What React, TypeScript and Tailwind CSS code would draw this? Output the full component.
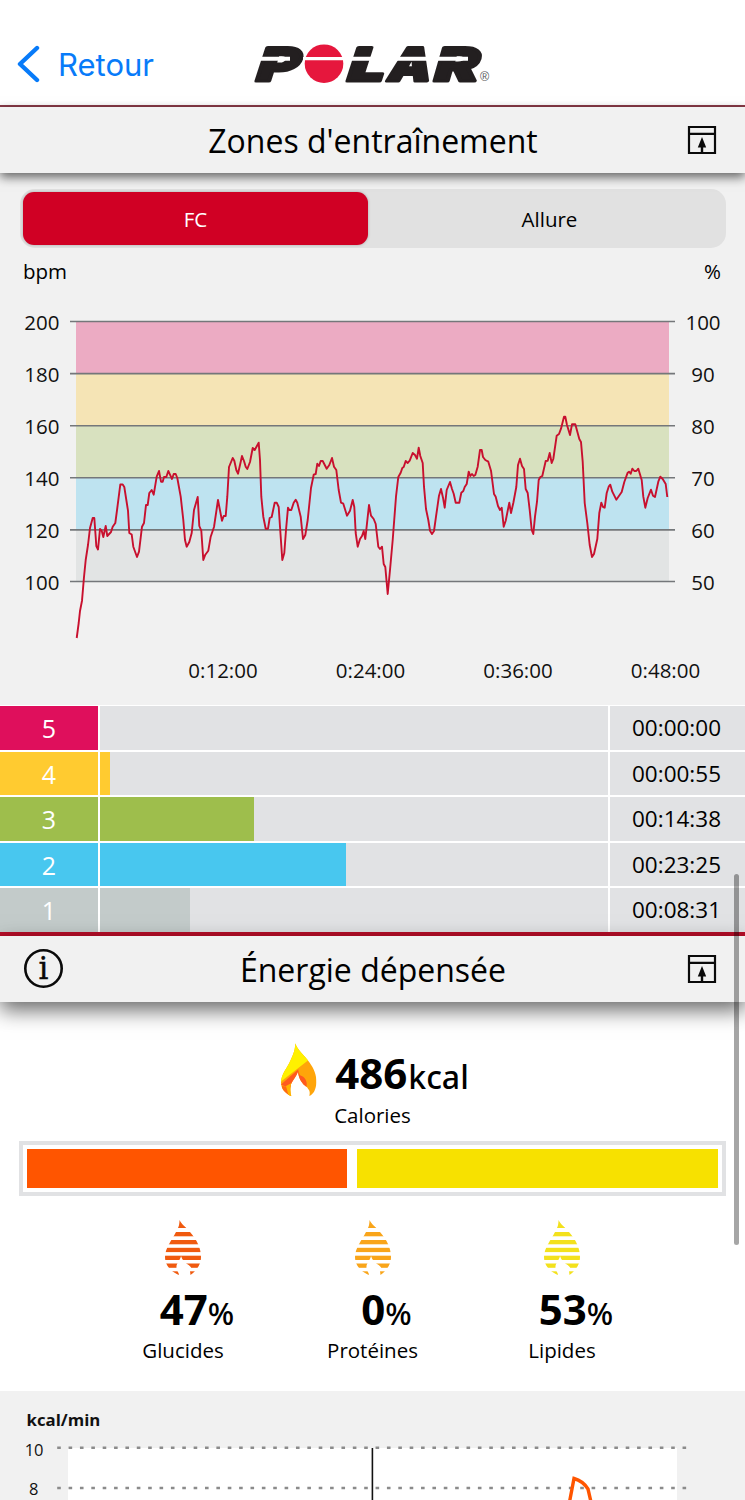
import type { ReactNode } from 'react';

const HR_POINTS =
  '76.7,638 78.7,623 80,611 82,600.7 84,577 85.7,560 88,545 90,528 92.7,518 94.3,518 95.7,537 96.3,546 98,549.5 100,529 101.7,530.7 103.3,537 105.7,526 107.3,536 111,532 112.7,526.7 115.3,523 117.3,508 120.3,484.5 122.7,484.5 124.3,487 128,510.7 129.3,533 131.7,534.5 133.3,546.7 137,557 139,551.7 142,526.7 144,523 146,505 147.7,505 149.3,493 151.7,490 153.7,494.7 156.7,476.7 159,471 161,481.7 162.7,481.7 164,477 166.3,477 168.3,471 170,474.7 172,479 173.7,474 175.7,474 177.3,478 180.7,496.7 183.3,520 185,540 186.7,546.7 189.3,542 191.7,533 194,510 197.7,497 199.3,526 201.3,530.7 203.3,560 205.3,554.7 208.3,550.7 210.7,536.7 214,527 218,500 222,520.7 223.7,516 225.7,516 227.3,496.7 229,467 232.7,458 234.3,460.7 236.3,470 238,473.7 240,465 242,456 244,461 245.7,466.7 247.3,469 250,462 252.7,448 254.7,450 258.7,442.7 260,460 261.3,496.7 263.3,516.7 265.7,528.7 268,528.7 269.7,518 271.7,517 274.7,502.7 276.7,502.7 278.7,507 280,526.7 282.3,560 284.3,553 286,530 288,507.7 289.3,510 291.3,510 293.7,502.7 295.7,499.7 297.3,502.7 300.7,516.7 303,539 305.3,535 307.7,520 311,488 313.7,474.7 315.7,474 317.3,463.7 319,466 320.7,461 322.7,461 326.7,468.7 329.3,465 332,458 334,466.7 336.3,470 338.7,490 341,502.7 343.3,503.7 347,515.7 350,510.7 352.7,500 354.3,507 355.7,533 357.7,546.7 360,539 362,536 363.7,531 365.3,539 369,505 371,515.7 373.7,519 375.7,524 378.3,546.7 380,549 382,546.7 383.7,564 385.3,567 387.7,594 390,570 392.7,540 396,496.7 398.3,477 400.7,472.7 402.3,468 403.7,467 405.7,461 407.7,463 409.7,460.7 412.7,453 415,455 417,458.7 418.7,447.7 420.3,456 422.7,463 424,486.7 426,509 428.3,520 430,530.7 432,534 434,531 436,516.7 439,495.7 441,489 443,497.7 444.7,507.7 446.7,490 450,482 452,489 453.7,493.7 455.7,502.7 459.3,502.7 461.3,492.7 463.3,491 464.7,487 466.7,484 468.7,471.7 470.3,476 472,474 473.7,476 475.3,475 477.7,466.7 480,450 481.7,450 483,457 485.3,460 488.3,461.7 491,470.7 494,494 495.7,496.7 498,506 500,510 501.7,507.7 503.7,526.7 505.7,520.7 509.3,502.7 511,513 513.3,503 516.3,487 518,465 520,458.7 522,466 524,469 525.7,489 527.7,493 529.7,510 531.7,530 533.3,534 535,516.7 537,501.7 538.7,480 540.3,477 542.3,476 545.7,461 547.7,460.7 549.7,453 551.7,463 553.3,459 556.7,435.7 559,434 561,428.7 564,416.7 565.3,416.7 567,425 570,435 572,424.3 575.3,424.3 579.3,439 581,442 582.7,461.7 584.7,503 587.3,523 589.7,545 592,557 594,554 597.3,539 599.3,513 601.3,502.7 603,507 604.7,507.7 606.7,493 608.7,486.7 610.3,484.7 612.3,491.7 616.3,499.7 621.7,492 624.3,482 627.7,472.7 629,471.7 630.7,473.7 632.3,468.7 634.3,471 636.3,471 638.3,468.7 641.7,480 643.3,496.7 645.3,507.7 647.7,498 651,489.7 653,495.7 655,497 658.3,481.7 660.3,476.7 662.7,479 665.7,484 667.3,497';

const bands = [
  { y: 321.5, fill: '#ecabc3' },
  { y: 373.6, fill: '#f5e4b5' },
  { y: 425.7, fill: '#d8e1bf' },
  { y: 477.8, fill: '#bee3f0' },
  { y: 529.9, fill: '#e2e4e4' },
];

const axis = [
  { y: 321.5, bpm: '200', pct: '100' },
  { y: 373.6, bpm: '180', pct: '90' },
  { y: 425.7, bpm: '160', pct: '80' },
  { y: 477.8, bpm: '140', pct: '70' },
  { y: 529.9, bpm: '120', pct: '60' },
  { y: 581.5, bpm: '100', pct: '50' },
];

const times = [
  { x: 223, label: '0:12:00' },
  { x: 370.5, label: '0:24:00' },
  { x: 518, label: '0:36:00' },
  { x: 665.5, label: '0:48:00' },
];

const zones = [
  { zone: 5, color: 'bg-[#df0f5c]', width: 0, time: '00:00:00' },
  { zone: 4, color: 'bg-[#ffcb30]', width: 10, time: '00:00:55' },
  { zone: 3, color: 'bg-[#9ebe4c]', width: 154, time: '00:14:38' },
  { zone: 2, color: 'bg-[#48c7ef]', width: 246, time: '00:23:25' },
  { zone: 1, color: 'bg-[#c3cbca]', width: 90, time: '00:08:31' },
];

const nutrients = [
  { value: '47', label: 'Glucides', color: '#f05a0f' },
  { value: '0', label: 'Protéines', color: '#f9a51a' },
  { value: '53', label: 'Lipides', color: '#f3e11c' },
];

function PolarLogo() {
  return (
    <svg width="240" height="46" viewBox="252 41 240 46" className="block" role="img" aria-label="Polar">
      <g
        fill="#231f20"
        stroke="#231f20"
        strokeWidth="3"
        strokeLinejoin="round"
        fontFamily="Inter, 'Liberation Sans', sans-serif"
        fontWeight="900"
        fontSize="46"
      >
        <text transform="translate(253.5 80.5) skewX(-18)" textLength="42" lengthAdjust="spacingAndGlyphs">P</text>
        <text transform="translate(344.5 80.5) skewX(-18)" textLength="37" lengthAdjust="spacingAndGlyphs">L</text>
        <text transform="translate(385.5 80.5) skewX(-14)" textLength="43" lengthAdjust="spacingAndGlyphs">A</text>
        <text transform="translate(431.5 80.5) skewX(-16)" textLength="44" lengthAdjust="spacingAndGlyphs">R</text>
      </g>
      <circle cx="324" cy="63.7" r="19.3" fill="#e6173d" />
      <path d="M256 56.8h34v4h-34zM303 57h42v3.3h-42zM345 56.8h82v4h-82zM434 56.8h34v4h-34z" fill="#fff" />
      <text x="480" y="81" fontSize="12.5" fill="#555" fontFamily="'Liberation Sans', sans-serif">®</text>
    </svg>
  );
}

function ExpandIcon() {
  return (
    <svg width="30" height="30" viewBox="0 0 30 30" className="block">
      <path d="M2 2h26v26H2zM2 8.8h26" fill="none" stroke="#0a0a0a" strokeWidth="2.2" />
      <path d="M15 12l4.2 10.5h-3V28h-2.4v-5.5h-3z" fill="#0a0a0a" />
    </svg>
  );
}

function InfoIcon() {
  return (
    <svg width="40" height="40" viewBox="0 0 40 40" className="block">
      <circle cx="20.5" cy="19.5" r="18.2" fill="none" stroke="#0a0a0a" strokeWidth="2.6" />
      <text
        x="20.5"
        y="29.5"
        textAnchor="middle"
        fontSize="31"
        fontFamily="'DejaVu Serif', serif"
        fill="#0a0a0a"
        stroke="#0a0a0a"
        strokeWidth="0.4"
      >
        i
      </text>
    </svg>
  );
}

function FlameIcon() {
  return (
    <svg width="36" height="54" viewBox="67 39 108 162" className="block">
      <defs>
        <clipPath id="flame">
          <path d="M110 40C116 60 136 74 152 97C166 117 174 134 173 158C172 178 165 192 152 198C154 188 154 182 148 176C146 170 136 168 129 156C122 146 120 138 118 125C114 138 104 148 97 162C94 174 95 188 98 199C80 190 67 176 67 158C67 132 86 114 96 90C106 70 109 58 110 40Z" />
        </clipPath>
      </defs>
      <g clipPath="url(#flame)">
        <path d="M60 30h120v180H60z" fill="#ffa50a" />
        <path d="M60 30h110v44L60 160z" fill="#fff100" />
        <path d="M66 164L119 118V150L98 170L94 174Z" fill="#ff5a1f" />
        <path d="M118 122L124 136C138 140 148 154 143 172L118 168Z" fill="#ff5a1f" />
        <path d="M70 168L94 172L88 210L66 200Z" fill="#ff6a14" />
        <path d="M82 168L100 158V204L90 198Z" fill="#ffb400" />
      </g>
    </svg>
  );
}

function StripedFlame({ color, id }: { color: string; id: string }) {
  return (
    <svg width="36" height="56" viewBox="0 0 36 56" className="block">
      <defs>
        <clipPath id={id}>
          <path d="M14.5 0C17 5 21 7 25 12C32 20 36 28 36 37C36 45 31 51 25.5 55L25 51C30 45 19 46 16 36C15 41 11 43 11.5 48C12 51 14 53 14 55C6 52 0 45 0 37C0 28 7 20 11 12C14 7 14.5 4 14.5 0Z" />
        </clipPath>
      </defs>
      <g clipPath={`url(#${id})`} fill={color}>
        {[-1, 12, 20, 27.8, 35.7, 43.5, 51.3].map((y) => (
          <rect key={y} x="0" y={y} width="36" height={y < 0 ? 9 : 4.3} />
        ))}
      </g>
    </svg>
  );
}

function SectionHeader({ title, left }: { title: string; left?: ReactNode }) {
  return (
    <div className="flex h-[66px] items-center justify-between bg-[#f1f1f1] pl-[23px] pr-7">
      <div className="w-10">{left}</div>
      <h2 className="pl-1.5 pt-0.5 text-[32px] leading-none text-black">{title}</h2>
      <div className="flex w-10 justify-end">
        <ExpandIcon />
      </div>
    </div>
  );
}

function HeartRateChart() {
  return (
    <svg width="745" height="415" viewBox="0 290 745 415" className="block">
      {bands.map((band) => (
        <rect key={band.y} x="76" y={band.y} width="593" height="52.1" fill={band.fill} />
      ))}
      {axis.map((row) => (
        <g key={row.y} fontSize="20.5" fill="#111">
          <line x1="70" x2="675" y1={row.y} y2={row.y} stroke="#74777a" strokeWidth="1.6" />
          <text x="59.5" y={row.y + 8.5} textAnchor="end">{row.bpm}</text>
          <text x="703" y={row.y + 8.5} textAnchor="middle">{row.pct}</text>
        </g>
      ))}
      <polyline points={HR_POINTS} fill="none" stroke="#c8102e" strokeWidth="1.9" strokeLinejoin="round" />
      {times.map((t) => (
        <text key={t.label} x={t.x} y="678" fontSize="20.5" textAnchor="middle" fill="#111">
          {t.label}
        </text>
      ))}
    </svg>
  );
}

function EnergyChart() {
  return (
    <svg width="745" height="109" viewBox="0 1391 745 109" className="block">
      <rect x="68" y="1448" width="609" height="52" fill="#fff" />
      <text x="26.5" y="1426" fontSize="16.8" fontWeight="700" fill="#111">kcal/min</text>
      <text x="43.5" y="1456" fontSize="16.5" textAnchor="end" fill="#111">10</text>
      <text x="38.5" y="1495" fontSize="16.5" textAnchor="end" fill="#111">8</text>
      <path d="M57.2 1447.8H687M57.2 1488H687" stroke="#8b8b8b" strokeWidth="2.4" strokeDasharray="3.6 7.77" />
      <line x1="372.4" x2="372.4" y1="1448" y2="1500" stroke="#111" strokeWidth="1.6" />
      <path d="M569.5 1502L574 1478.5Q583 1481 588 1489L591 1502" fill="none" stroke="#ff5500" strokeWidth="3.4" />
    </svg>
  );
}

export default function App() {
  return (
    <div className="relative h-[1500px] w-[745px] overflow-hidden bg-white font-['Open_Sans','Noto_Sans',sans-serif] text-black">
      {/* Top bar */}
      <header className="flex h-[107px] items-start border-b-2 border-[#8a3a48] pt-[41px]">
        <button className="flex h-[46px] w-[252px] items-center gap-[18px] pl-[17px] text-[#087bf9]">
          <svg width="23" height="38" viewBox="0 0 23 38">
            <path d="M20 3L3 19L20 35" fill="none" stroke="currentColor" strokeWidth="4.4" strokeLinecap="round" strokeLinejoin="round" />
          </svg>
          <span className="font-['Inter',sans-serif] text-[31px] leading-none">Retour</span>
        </button>
        <PolarLogo />
      </header>

      {/* Training zones */}
      <section className="bg-[#f1f1f1]">
        <div className="relative z-10 shadow-[0_4px_10px_rgba(0,0,0,0.6)]">
          <SectionHeader title="Zones d'entraînement" />
        </div>
        <div className="px-5 pt-4">
          <div className="flex h-[59px] w-[706px] rounded-[15px] bg-[#e1e1e1] p-[3px] text-[20.5px]">
            <div className="flex w-[345px] items-center justify-center rounded-[11px] bg-[#d00024] pt-0.5 text-white shadow-[0_0_3px_rgba(0,0,0,0.25)]">
              FC
            </div>
            <div className="flex flex-1 items-center justify-center pl-2 pt-0.5">Allure</div>
          </div>
        </div>
        <div className="flex h-[42px] items-center justify-between pl-[23px] pr-6 pt-1 text-[20.5px] leading-none">
          <span>bpm</span>
          <span>%</span>
        </div>
        <HeartRateChart />

        <div className="flex flex-col gap-0.5 border-t-[1.5px] border-white bg-white">
          {zones.map((z) => (
            <div key={z.zone} className="flex h-[43.5px] gap-0.5">
              <div className={`flex w-[98px] items-center justify-center pt-0.5 text-[25px] text-white ${z.color}`}>{z.zone}</div>
              <div className="w-[508px] bg-[#e1e2e4]">
                <div className={`h-full ${z.color}`} style={{ width: z.width }} />
              </div>
              <div className="flex flex-1 items-center justify-end bg-[#e1e2e4] pr-6 pt-px text-[22.5px]">{z.time}</div>
            </div>
          ))}
        </div>
      </section>

      {/* Energy */}
      <section className="border-t-4 border-[#b80d28]">
        <div className="relative z-10 shadow-[0_8px_20px_rgba(0,0,0,0.6)]">
          <SectionHeader title="Énergie dépensée" left={<InfoIcon />} />
        </div>
        <div className="flex flex-col items-center pt-[40px]">
          <div className="flex h-[56px] items-center gap-[18px] pl-[5px]">
            <FlameIcon />
            <p className="flex items-baseline gap-px pt-1.5 leading-none">
              <span className="text-[42px] font-bold">486</span>
              <span className="font-['Noto_Sans',sans-serif] text-[32px] font-medium">kcal</span>
            </p>
          </div>
          <p className="mt-[5px] text-[20.5px] leading-[24px]">Calories</p>
        </div>
        <div className="ml-[19px] mt-[14px] flex h-[55px] w-[707px] gap-[10px] border-4 border-[#e1e2e4] p-1">
          <div className="w-[320px] bg-[#ff5500]" />
          <div className="flex-1 bg-[#f7e100]" />
        </div>
        <div className="flex h-[195px] justify-center pt-6">
          {nutrients.map((n) => (
            <div key={n.label} className="flex w-[189.5px] flex-col items-center">
              <StripedFlame color={n.color} id={`flame-${n.label}`} />
              <p className="mt-3 flex items-baseline pl-7 leading-none">
                <span className="text-[42px] font-bold">{n.value}</span>
                <span className="font-['Noto_Sans',sans-serif] text-[31px] font-medium">%</span>
              </p>
              <p className="mt-2 text-[20.5px] leading-[24px]">{n.label}</p>
            </div>
          ))}
        </div>
        <div className="bg-[#f1f1f1]">
          <EnergyChart />
        </div>
      </section>

      {/* Scrollbar */}
      <div className="absolute left-[734px] top-[874px] z-20 h-[371px] w-[5px] rounded-full bg-black/35" />
    </div>
  );
}
